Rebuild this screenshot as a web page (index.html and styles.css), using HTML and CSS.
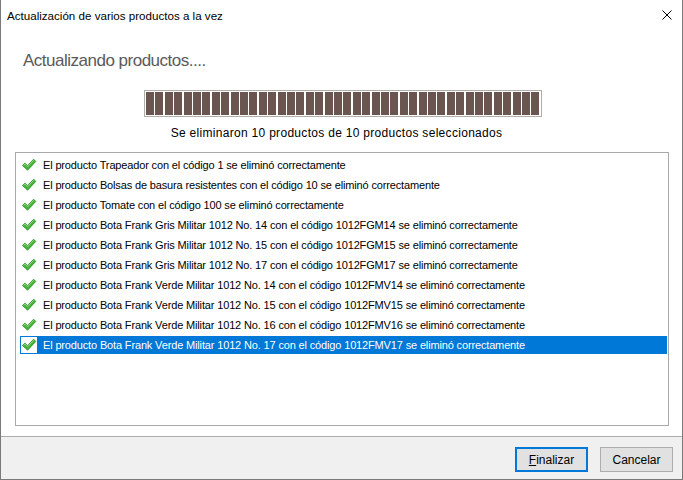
FILE: index.html
```html
<!DOCTYPE html>
<html>
<head lang="es">
    <meta charset="UTF-8">
    <title>Actualización de varios productos a la vez</title>
    <link rel="stylesheet" href="styles.css">
</head>
<body>
<div class="dialog">
    <div class="titlebar">
        <span class="title">Actualización de varios productos a la vez</span>
        <span class="close">
            <svg width="10" height="10" viewBox="0 0 10 10"><path d="M0.5 0.5L9.5 9.5M9.5 0.5L0.5 9.5" stroke="#000" stroke-width="1"/></svg>
        </span>
    </div>
    <div class="content">
        <h1 class="heading">Actualizando productos....</h1>
        <div class="progress"><div class="fill"></div></div>
        <p class="caption">Se eliminaron 10 productos de 10 productos seleccionados</p>
        <ul class="log" id="log"></ul>
    </div>
    <div class="footer">
        <button class="btn default"><u>F</u>inalizar</button>
        <button class="btn">Cancelar</button>
    </div>
</div>
<script>
    var productos = [
        ["Trapeador", "1"],
        ["Bolsas de basura resistentes", "10"],
        ["Tomate", "100"],
        ["Bota Frank Gris Militar 1012 No. 14", "1012FGM14"],
        ["Bota Frank Gris Militar 1012 No. 15", "1012FGM15"],
        ["Bota Frank Gris Militar 1012 No. 17", "1012FGM17"],
        ["Bota Frank Verde Militar 1012 No. 14", "1012FMV14"],
        ["Bota Frank Verde Militar 1012 No. 15", "1012FMV15"],
        ["Bota Frank Verde Militar 1012 No. 16", "1012FMV16"],
        ["Bota Frank Verde Militar 1012 No. 17", "1012FMV17"]
    ];
    var check = '<svg class="ok" width="16" height="16" viewBox="0 0 16 16">' +
        '<path d="M1.5 8.5L4 6.2L6.6 8.6L12.6 2.2L14.8 4.4L6.6 13.2Z" fill="#45b53c" stroke="#2a8a2a" stroke-width="0.8" stroke-linejoin="round"/>' +
        '<path d="M2.6 8.4L4 7.2L6.6 9.6L12.6 3.3" fill="none" stroke="#8fdc7a" stroke-width="1"/>' +
        '</svg>';
    var log = document.getElementById('log');
    var html = '';
    for (var i = 0; i < productos.length; i++) {
        var cls = i == productos.length - 1 ? ' class="selected"' : '';
        html += '<li' + cls + '><span class="icon">' + check + '</span>' +
            '<span class="text">El producto ' + productos[i][0] + ' con el código ' + productos[i][1] +
            ' se eliminó correctamente</span></li>';
    }
    log.innerHTML = html;
</script>
</body>
</html>
```

FILE: styles.css
```css
* {
    margin: 0;
    padding: 0;
}

body {
    width: 683px;
    height: 480px;
    overflow: hidden;
    background-color: #fff;
}

.dialog {
    width: 683px;
    height: 480px;
    box-sizing: border-box;
    border: 1px solid #7a7a7a;
    border-top: none;
    display: flex;
    flex-direction: column;
    background-color: #fff;
    font-family: "Liberation Sans", Arial, sans-serif;
}

.titlebar {
    height: 30px;
    display: flex;
    align-items: center;
    justify-content: space-between;
    padding: 0 10px 2px 6px;
}

.title {
    font-size: 11.6px;
    color: #000;
}

.close {
    display: flex;
    width: 10px;
    height: 10px;
}

.content {
    flex: 1;
    display: flex;
    flex-direction: column;
    padding: 18px 13px 10px 14px;
}

.heading {
    font-size: 17px;
    font-weight: normal;
    line-height: 22px;
    letter-spacing: -0.5px;
    color: #5a5a5a;
    margin-left: 8px;
}

.progress {
    width: 398px;
    height: 27px;
    box-sizing: border-box;
    border: 1px solid #b3aca6;
    padding: 1px 2px 1px 1px;
    margin: 18px auto 0;
    position: relative;
    left: 1px;
}

.progress .fill {
    height: 100%;
    background: repeating-linear-gradient(90deg, #6a5551 0, #6a5551 8px, #ffffff 8px, #ffffff 9.4px);
}

.caption {
    font-size: 12px;
    line-height: 16px;
    letter-spacing: 0.3px;
    text-align: center;
    margin-top: 8px;
    padding-right: 11px;
    color: #000;
}

.log {
    flex: 1;
    list-style: none;
    margin-top: 11px;
    border: 1px solid #a9a9a9;
    padding: 3px 1px 0 4px;
}

.log li {
    height: 18px;
    margin-bottom: 2px;
    display: flex;
    align-items: center;
    padding-left: 1px;
    font-size: 11px;
    letter-spacing: -0.15px;
    color: #000;
}

.log .icon {
    width: 16px;
    height: 16px;
    display: flex;
    margin-right: 6px;
}

.log li.selected {
    background-color: #0078d7;
    color: #fff;
}

.log li.selected .icon {
    background-color: #fff;
}

.footer {
    height: 43px;
    box-sizing: border-box;
    border-top: 1px solid #adadad;
    background-color: #f0f0f0;
    display: flex;
    justify-content: flex-end;
    align-items: flex-start;
    gap: 12px;
    padding: 10px 9px 0 0;
}

.btn {
    width: 73px;
    height: 25px;
    box-sizing: border-box;
    border: 1px solid #adadad;
    background-color: #e1e1e1;
    font-family: "Liberation Sans", Arial, sans-serif;
    font-size: 12px;
    color: #000;
}

.btn.default {
    border: 2px solid #0078d7;
}
```
